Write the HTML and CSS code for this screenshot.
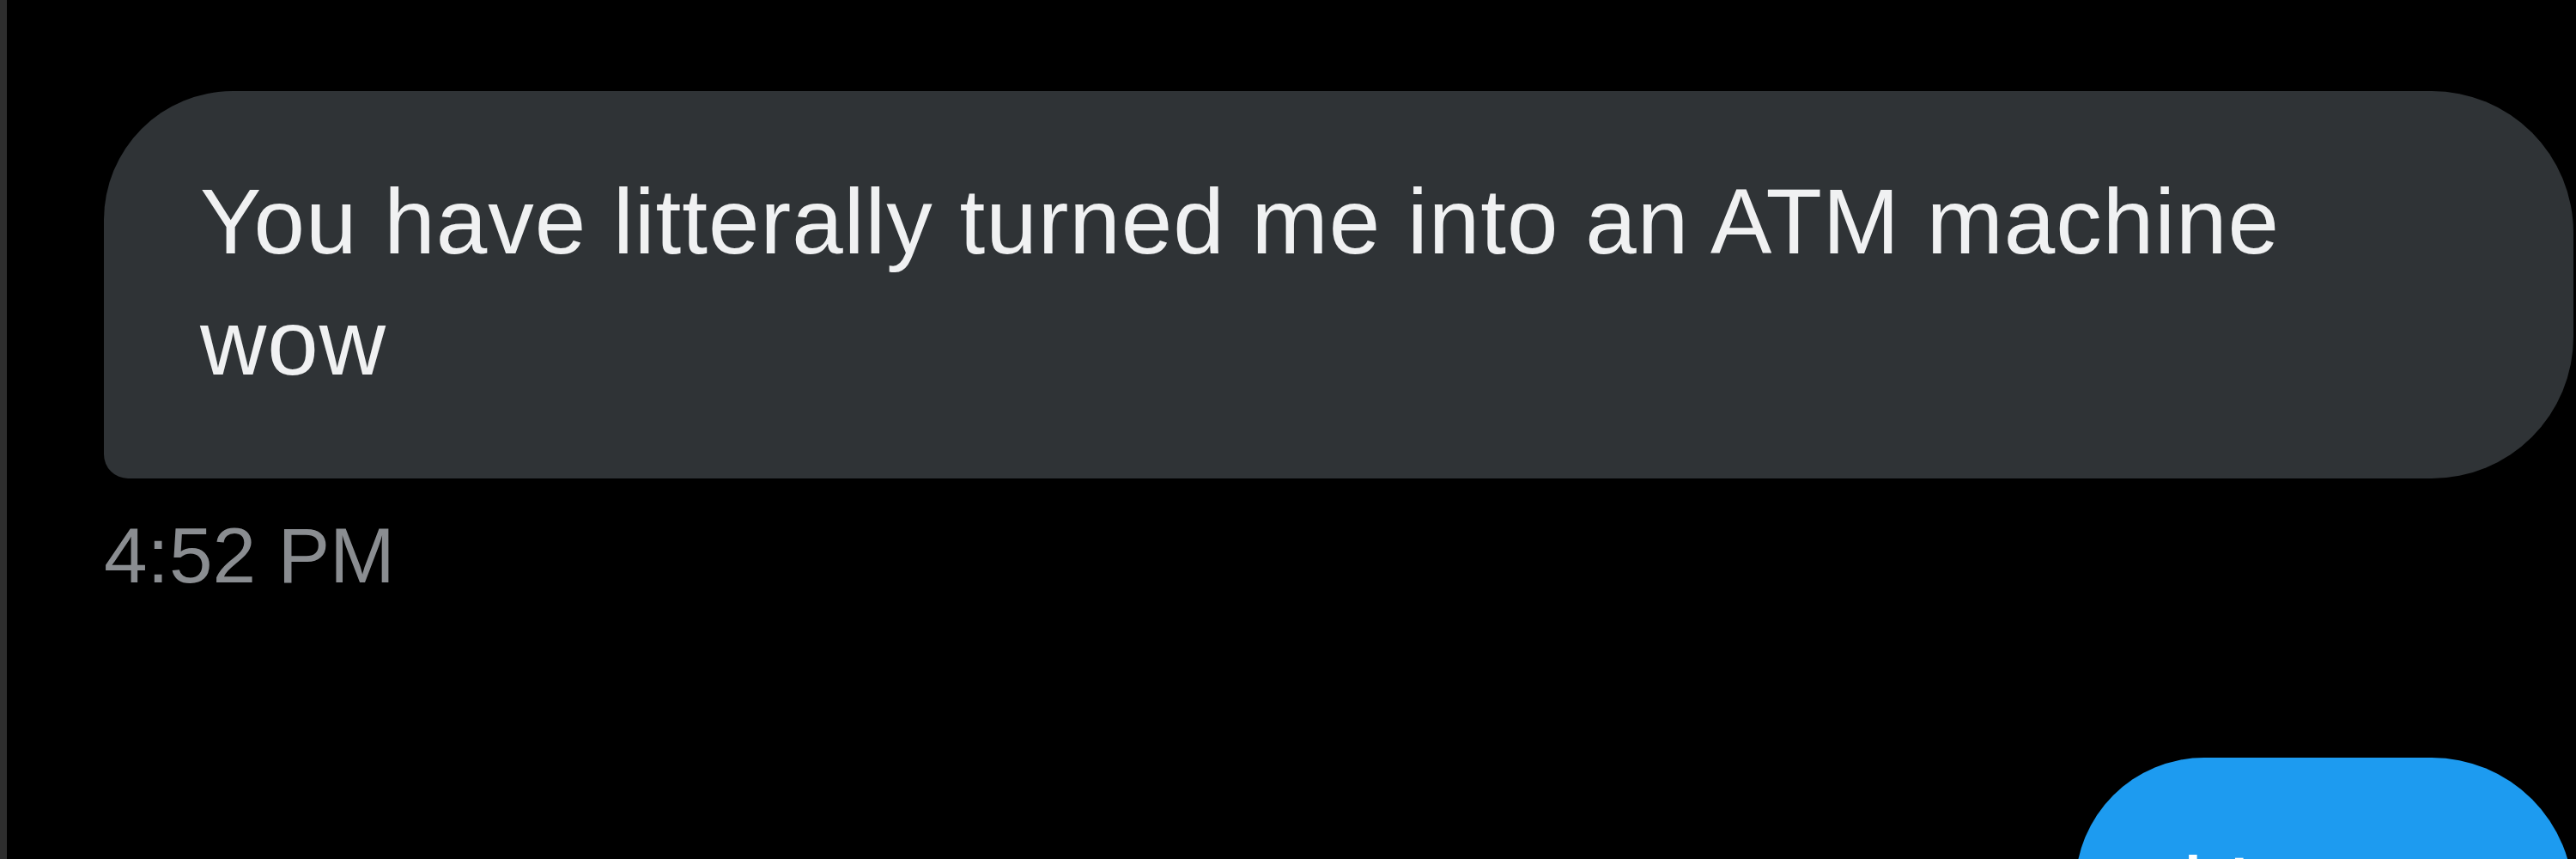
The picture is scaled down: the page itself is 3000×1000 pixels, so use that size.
FILE: index.html
```html
<!DOCTYPE html>
<html lang="en">
<head>
  <meta charset="UTF-8">
  <meta name="viewport" content="width=device-width, initial-scale=1.0">
  <title>Messages</title>
  <link rel="stylesheet" href="styles.css">
</head>
<body>
  <div class="chat">
    <!-- Received message -->
    <div class="msg incoming">
      <div class="bubble">You have litterally turned me into an ATM machine wow</div>
      <div class="time">4:52 PM</div>
    </div>

    <!-- Sent message -->
    <div class="msg outgoing">
      <div class="bubble">it's not that deep</div>
    </div>
  </div>
</body>
</html>
```

FILE: styles.css
```css
body {
  margin: 0;
  background: #000;
  font-family: "Liberation Sans", Arial, sans-serif;
  overflow: hidden;
}

.chat {
  height: 1000px;
  box-sizing: border-box;
  border-left: 8px solid #2e2e2e;
  padding: 106px 3px 0 113px;
  display: flex;
  flex-direction: column;
  overflow: hidden;
}

.msg {
  display: flex;
  flex-direction: column;
}

.bubble {
  font-size: 107px;
  line-height: 141px;
  letter-spacing: 1px;
}

.incoming .bubble {
  background: #2f3336;
  color: #f0f1f2;
  padding: 82px 180px 87px 112px;
  border-radius: 150px 165px 165px 28px;
}

.time {
  margin-top: 36px;
  font-size: 91px;
  line-height: 108px;
  color: #8a8d91;
}

.outgoing {
  margin-top: 181px;
  align-items: flex-end;
}

.outgoing .bubble {
  width: 580px;
  box-sizing: border-box;
  background: #1d9bf0;
  color: #fff;
  padding: 84px 60px 80px 125px;
  border-radius: 150px 165px 28px 165px;
}
```
